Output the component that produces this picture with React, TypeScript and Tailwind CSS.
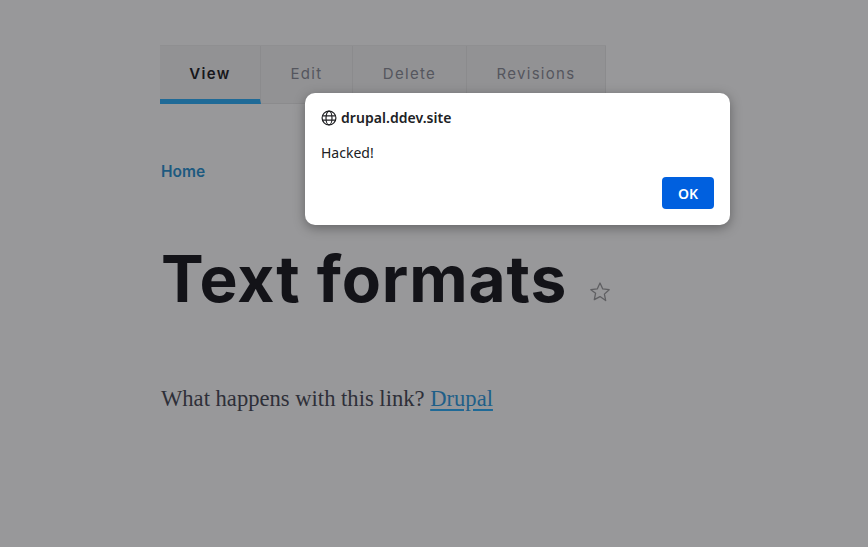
import React from "react";

const tabs = [
  { label: "View", w: "w-[101px]", active: true },
  { label: "Edit", w: "w-[92px]", active: false },
  { label: "Delete", w: "w-[114px]", active: false },
  { label: "Revisions", w: "w-[139px]", active: false },
];

export default function App() {
  return (
    <div className="relative h-[547px] w-[868px] overflow-hidden bg-[#98989a] font-['Inter',sans-serif]">
      <div className="flex flex-col pl-[160px] pt-[45px]">
        <div className="flex h-[59px] w-[446px] border-t border-[#8f8f91] bg-[#929294]">
          {tabs.map((t) => (
            <div
              key={t.label}
              className={`${t.w} flex items-center justify-center border-r border-[#8b8b8d] text-[15px] tracking-[1.3px] ${
                t.active
                  ? "border-b-[5px] border-b-[#1f6a97] pt-[3px] font-semibold text-[#17171b]"
                  : "border-b border-b-[#8b8b8d] pb-[1px] font-normal text-[#55565e]"
              }`}
            >
              {t.label}
            </div>
          ))}
        </div>
        <a className="ml-[1px] mt-[58px] text-[15.5px] font-semibold leading-[20px] text-[#1d5a80]">Home</a>
        <div className="ml-[1px] mt-[59px] flex items-end">
          <h1 className="text-[64px] font-bold leading-[76px] tracking-[0.9px] text-[#131318]">Text formats</h1>
          <svg width="22" height="22" viewBox="0 0 24 24" fill="none" stroke="#5f5f62" strokeWidth="1.4" strokeLinejoin="round" className="mb-[14px] ml-[22px]">
            <path d="M12 2.2l3 6.5 7 .8-5.2 4.8 1.4 7L12 17l-6.2 3.3 1.4-7L2 9.5l7-.8z" />
          </svg>
        </div>
        <p className="ml-[1px] mt-[67px] font-['Liberation_Serif',serif] text-[22.6px] leading-[30px] text-[#2e2f38]">
          What happens with this link?{" "}
          <a className="text-[#1f5f88] underline decoration-[#1f6a97] decoration-2 underline-offset-[3px]">Drupal</a>
        </p>
      </div>

      <div className="absolute left-[305px] top-[93px] h-[132px] w-[425px] rounded-[10px] bg-white px-4 font-['Noto_Sans',sans-serif] shadow-[0_3px_12px_rgba(0,0,0,0.35)]">
        <div className="flex items-center gap-[4px] pt-[15px] text-[14px] font-semibold leading-[20px] tracking-[0.05px] text-[#202124]">
          <svg width="16" height="16" viewBox="0 0 16 16" fill="none" stroke="#202124" strokeWidth="1.2">
            <circle cx="8" cy="8" r="6.9" />
            <ellipse cx="8" cy="8" rx="3" ry="6.9" />
            <path d="M1.3 5.8h13.4M1.3 10.2h13.4" />
          </svg>
          <span>drupal.ddev.site</span>
        </div>
        <p className="mt-[15px] text-[14px] leading-[20px] text-[#202124]">Hacked!</p>
        <div className="mt-[14px] flex justify-end">
          <button className="h-[32px] w-[52px] rounded-[4px] bg-[#0060df] text-[14px] font-semibold text-white">OK</button>
        </div>
      </div>
    </div>
  );
}
